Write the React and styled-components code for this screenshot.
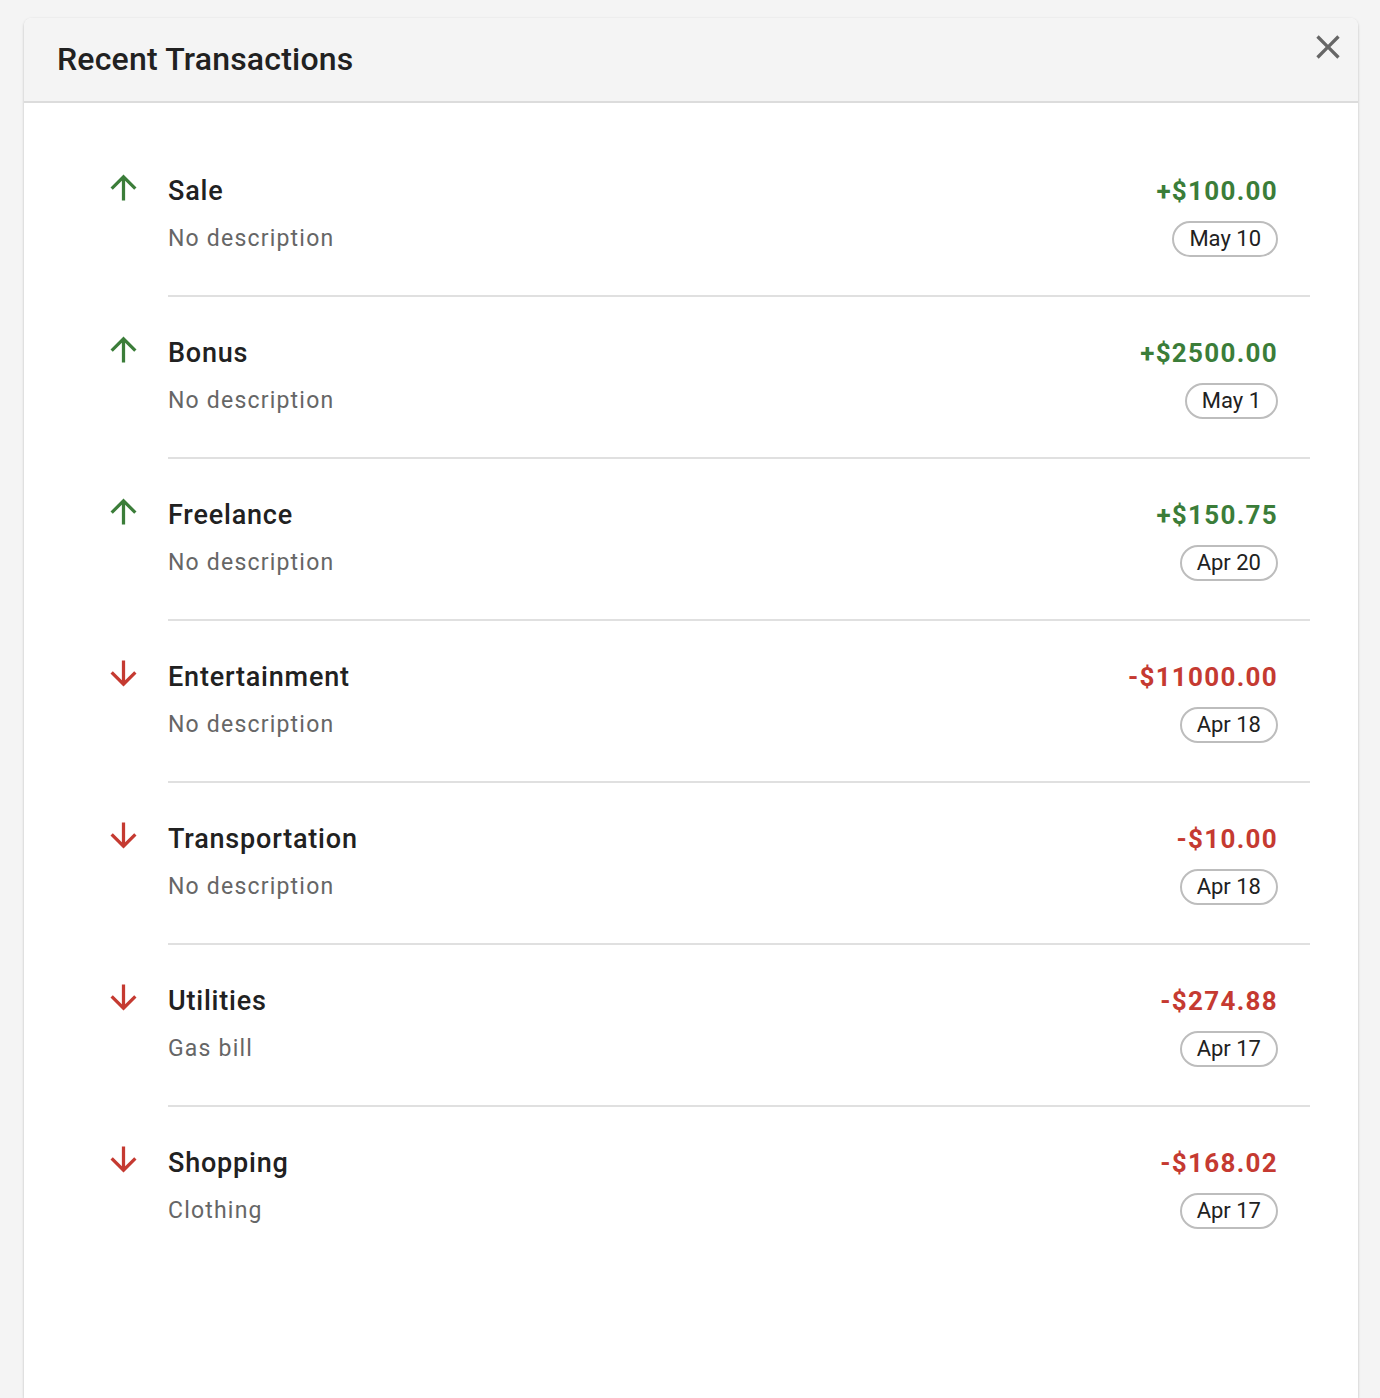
import React from "react";
import styled, { createGlobalStyle } from "styled-components";

const transactions = [
  { id: 1, category: "Sale", note: "No description", amount: "+$100.00", date: "May 10", income: true },
  { id: 2, category: "Bonus", note: "No description", amount: "+$2500.00", date: "May 1", income: true },
  { id: 3, category: "Freelance", note: "No description", amount: "+$150.75", date: "Apr 20", income: true },
  { id: 4, category: "Entertainment", note: "No description", amount: "-$11000.00", date: "Apr 18", income: false },
  { id: 5, category: "Transportation", note: "No description", amount: "-$10.00", date: "Apr 18", income: false },
  { id: 6, category: "Utilities", note: "Gas bill", amount: "-$274.88", date: "Apr 17", income: false },
  { id: 7, category: "Shopping", note: "Clothing", amount: "-$168.02", date: "Apr 17", income: false },
];

const GREEN = "#3b7d39";
const RED = "#c53a31";

function ArrowIcon({ up }) {
  return (
    <svg width="39" height="39" viewBox="0 0 24 24" fill="currentColor">
      {up ? (
        <path d="M4 12l1.41 1.41L11 7.83V20h2V7.83l5.58 5.59L20 12l-8-8-8 8z" />
      ) : (
        <path d="M20 12l-1.41-1.41L13 16.17V4h-2v12.17l-5.58-5.59L4 12l8 8 8-8z" />
      )}
    </svg>
  );
}

function App() {
  return (
    <>
      <GlobalStyle />
      <Page>
        <Card>
          <Header>
            <Title>Recent Transactions</Title>
            <CloseButton aria-label="close">
              <svg width="40" height="40" viewBox="0 0 24 24" fill="currentColor">
                <path d="M19 6.41 17.59 5 12 10.59 6.41 5 5 6.41 10.59 12 5 17.59 6.41 19 12 13.41 17.59 19 19 17.59 13.41 12z" />
              </svg>
            </CloseButton>
          </Header>
          <List>
            {transactions.map((t, i) => (
              <li key={t.id}>
                <Row>
                  <IconCell income={t.income}>
                    <ArrowIcon up={t.income} />
                  </IconCell>
                  <TextCell>
                    <Category>{t.category}</Category>
                    <Note>{t.note}</Note>
                  </TextCell>
                  <SideCell>
                    <Amount income={t.income}>{t.amount}</Amount>
                    <DateChip>{t.date}</DateChip>
                  </SideCell>
                </Row>
                {i < transactions.length - 1 && <Divider />}
              </li>
            ))}
          </List>
        </Card>
      </Page>
    </>
  );
}

export default App;

const GlobalStyle = createGlobalStyle`
  html, body {
    margin: 0;
    padding: 0;
    background: #f4f4f4;
    font-family: Roboto, "Liberation Sans", sans-serif;
    overflow: hidden;
  }
`;

const Page = styled.div`
  padding: 18px 22px 0 24px;
  height: 1398px;
  box-sizing: border-box;
`;

const Card = styled.div`
  background: #fff;
  border-radius: 8px 8px 0 0;
  box-shadow: 0 1px 3px rgba(0, 0, 0, 0.2), 0 1px 1px rgba(0, 0, 0, 0.1);
  height: 100%;
  overflow: hidden;
`;

const Header = styled.div`
  display: flex;
  justify-content: space-between;
  align-items: flex-start;
  height: 83px;
  background: #f4f4f4;
  border-bottom: 2px solid #dcdcdc;
  padding: 0 10px 0 33px;
`;

const Title = styled.h2`
  margin: 0;
  font-size: 32px;
  font-weight: 500;
  letter-spacing: 0.2px;
  line-height: 83px;
  color: #212121;
`;

const CloseButton = styled.button`
  border: none;
  background: transparent;
  padding: 0;
  margin-top: 9px;
  width: 40px;
  height: 40px;
  color: #666;
  cursor: pointer;
  display: flex;
`;

const List = styled.ul`
  list-style: none;
  margin: 0;
  padding: 32px 0 0;
`;

const Row = styled.div`
  display: flex;
  align-items: flex-start;
  padding: 38px 80px 38px 80px;
`;

const IconCell = styled.div`
  width: 64px;
  flex-shrink: 0;
  margin-top: -5px;
  color: ${(p) => (p.income ? GREEN : RED)};
  display: flex;
`;

const TextCell = styled.div`
  flex: 1;
  display: flex;
  flex-direction: column;
  gap: 12px;
`;

const Category = styled.div`
  font-size: 27px;
  font-weight: 500;
  letter-spacing: 0.8px;
  line-height: 36px;
  color: #212121;
`;

const Note = styled.div`
  font-size: 23px;
  line-height: 36px;
  letter-spacing: 1.2px;
  color: #666;
`;

const SideCell = styled.div`
  display: flex;
  flex-direction: column;
  align-items: flex-end;
  gap: 12px;
`;

const Amount = styled.div`
  font-size: 26px;
  font-weight: 700;
  letter-spacing: 1.3px;
  line-height: 36px;
  color: ${(p) => (p.income ? GREEN : RED)};
`;

const DateChip = styled.div`
  box-sizing: border-box;
  height: 36px;
  padding: 0 15px;
  border: 2px solid #bdbdbd;
  border-radius: 18px;
  font-size: 22px;
  line-height: 32px;
  color: #212121;
`;

const Divider = styled.hr`
  border: none;
  height: 2px;
  background: #e0e0e0;
  margin: 0 48px 0 144px;
`;
